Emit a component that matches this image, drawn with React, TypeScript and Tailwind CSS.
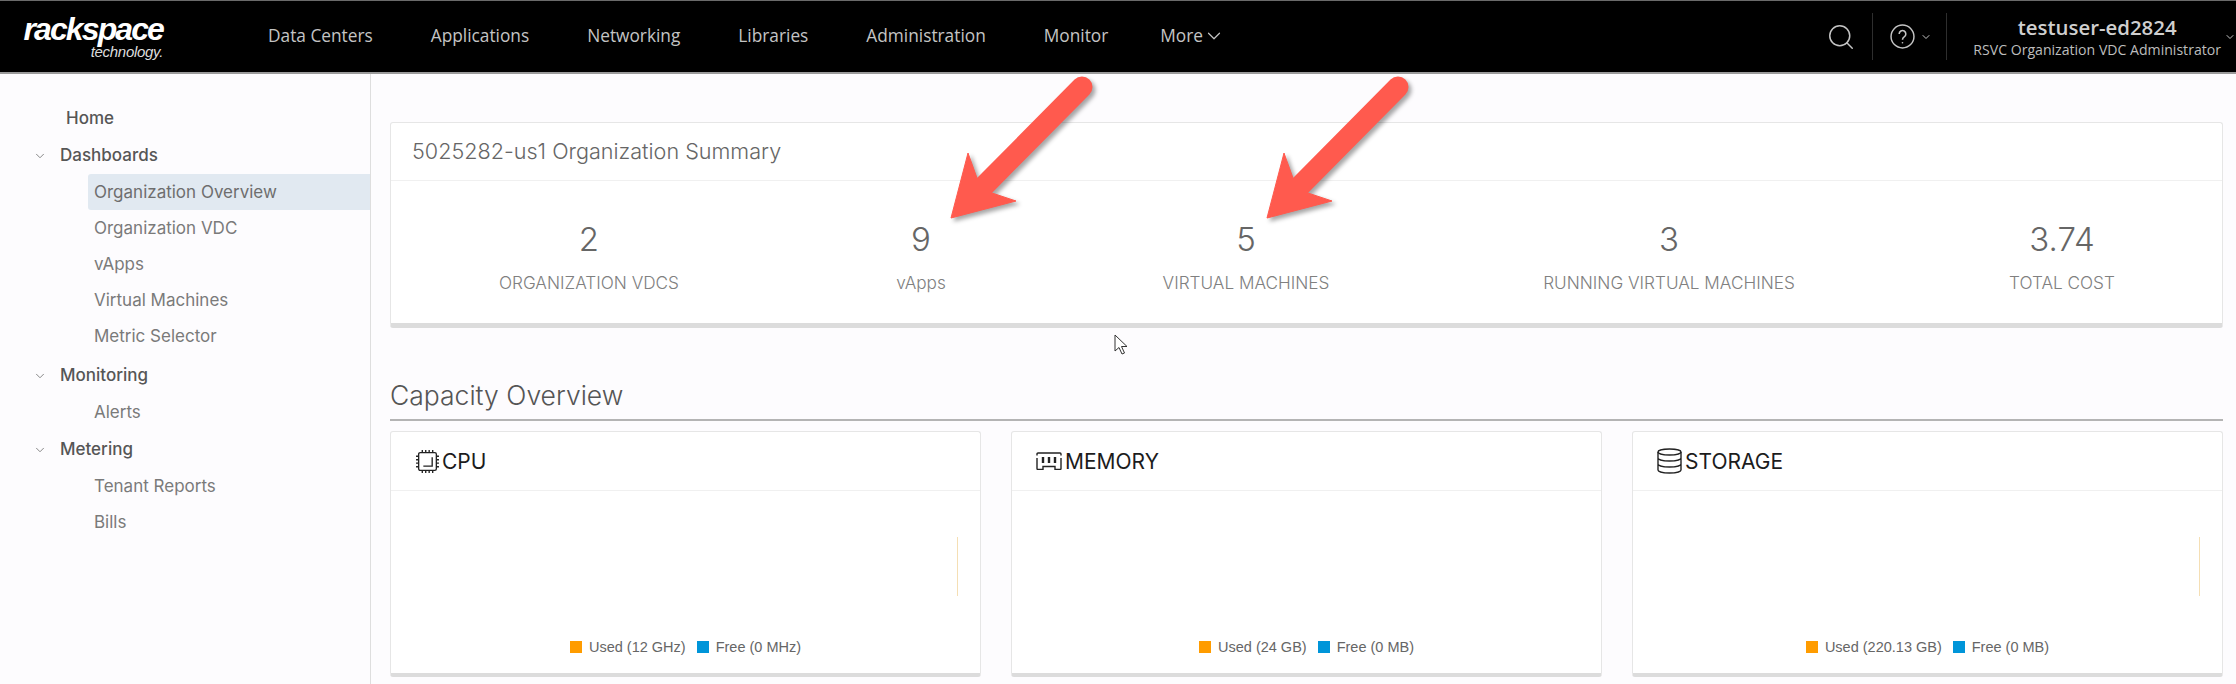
import { ChevronDown, Search } from 'lucide-react';

const navItems = ['Data Centers', 'Applications', 'Networking', 'Libraries', 'Administration', 'Monitor'];

const stats = [
  { value: '2', label: 'ORGANIZATION VDCS' },
  { value: '9', label: 'vApps' },
  { value: '5', label: 'VIRTUAL MACHINES' },
  { value: '3', label: 'RUNNING VIRTUAL MACHINES' },
  { value: '3.74', label: 'TOTAL COST' },
];

function SideGroup({ title, items, active }: { title: string; items: string[]; active?: string }) {
  return (
    <div className="mb-px">
      <div className="flex h-[37px] items-center pt-px font-medium text-[#565656]">
        <ChevronDown className="ml-[33px] mr-[13px] h-[14px] w-[14px] text-[#777]" strokeWidth={1.5} />
        {title}
      </div>
      {items.map((item) => (
        <div
          key={item}
          className={
            item === active
              ? 'ml-[88px] flex h-9 items-center rounded-l-[3px] bg-[#e1e9f1] pl-[6px] pt-px text-[#6e6e6e]'
              : 'ml-[88px] flex h-9 items-center pl-[6px] pt-px text-[#7a7a7a]'
          }
        >
          {item}
        </div>
      ))}
    </div>
  );
}

function CpuIcon() {
  return (
    <svg viewBox="0 0 24 24" className="h-[25px] w-[25px] shrink-0" fill="none" stroke="#222" strokeWidth="1.3">
      <rect x="3.5" y="3.5" width="17" height="17" rx="1.5" />
      <path d="M16.5 8v8.5H8M7 1v2.5M10.3 1v2.5M13.6 1v2.5M17 1v2.5M7 20.5V23M10.3 20.5V23M13.6 20.5V23M17 20.5V23M1 7h2.5M1 10.3h2.5M1 13.6h2.5M1 17h2.5M20.5 7H23M20.5 10.3H23M20.5 13.6H23M20.5 17H23" />
    </svg>
  );
}

function MemoryIcon() {
  return (
    <svg viewBox="0 0 26 18" className="h-[18px] w-[26px] shrink-0" fill="none" stroke="#222" strokeWidth="1.4">
      <path d="M1 3.5V2a1 1 0 0 1 1-1h22a1 1 0 0 1 1 1v1.5M1 6v10.500a1 1 0 0 0 1 1h5v-3h12v3h5a1 1 0 0 0 1-1V6" />
      <path d="M7 5v6M13 5v6M19 5v6" strokeWidth="2.400" />
    </svg>
  );
}

function StorageIcon() {
  return (
    <svg viewBox="0 0 25 26" className="h-[26px] w-[25px] shrink-0" fill="none" stroke="#222" strokeWidth="1.4">
      <ellipse cx="12.500" cy="4" rx="11.500" ry="3" />
      <path d="M1 4v18c0 1.700 5.100 3 11.500 3s11.500-1.300 11.500-3V4M1 10c0 1.700 5.100 3 11.500 3S24 11.700 24 10M1 16c0 1.700 5.100 3 11.500 3S24 17.700 24 16" />
    </svg>
  );
}

function CapacityCard({
  title,
  icon,
  used,
  free,
  bar,
  gap,
}: {
  title: string;
  icon: React.ReactNode;
  used: string;
  free: string;
  bar?: boolean;
  gap: string;
}) {
  return (
    <div className="flex h-[246px] flex-col rounded-[3px] border border-[#e6e6e6] border-b-[4px] border-b-[#dcdcdc] bg-white">
      <div className={`flex h-[59px] shrink-0 items-center border-b border-[#f0f0f0] pl-6 text-[21px] leading-none text-[#1c1c1c] ${gap}`}>
        {icon}
        <span>{title}</span>
      </div>
      <div className="flex h-[105px] shrink-0 items-end justify-end pr-[22px]">
        {bar && <div className="h-[59px] w-px bg-[#f5dfb4]" />}
      </div>
      <div className="mt-[44px] flex items-center justify-center font-['Liberation_Sans',sans-serif] text-[14.5px] leading-none text-[#666]">
        <span className="mr-[7px] h-3 w-3 bg-[#ff9c00]" />
        <span className="mr-[11px]">{used}</span>
        <span className="mr-[7px] h-3 w-3 bg-[#0095d9]" />
        <span>{free}</span>
      </div>
    </div>
  );
}

export default function App() {
  return (
    <div className="relative flex h-[684px] w-[2236px] flex-col overflow-hidden bg-[#fdfcfe] font-[Inter,sans-serif]">
      <header className="flex h-[74px] shrink-0 items-center border-t border-t-[#6a6a6a] border-b-2 border-b-[#9a9a9a] bg-black">
        <div className="ml-[23px] flex w-[140px] flex-col items-end font-['Liberation_Sans',sans-serif] italic text-white">
          <span className="text-[32px] font-bold leading-[28px] tracking-[-1.9px]">rackspace</span>
          <span className="mt-[2px] text-[15px] leading-[14px] tracking-[-0.3px] text-[#ddd]">technology.</span>
        </div>
        <nav className="ml-[105px] flex items-center gap-[58px] pb-[2px] font-['Open_Sans',sans-serif] text-[17.3px] text-[#c4c4c4]">
          {navItems.map((item) => (
            <span key={item}>{item}</span>
          ))}
          <span className="-ml-[6px] flex items-center">
            More
            <ChevronDown className="h-[22px] w-[22px]" strokeWidth={1.3} />
          </span>
        </nav>
        <div className="ml-auto flex h-full items-center text-[#c4c4c4]">
          <Search className="h-[30px] w-[30px]" strokeWidth={1.2} />
          <div className="ml-[16px] h-[47px] w-px bg-[#2e2e2e]" />
          <svg viewBox="0 0 24 24" className="ml-[17px] h-[25px] w-[25px]" fill="none" stroke="currentColor" strokeWidth="1.400">
            <circle cx="12" cy="12" r="11" />
            <path d="M8.800 9.500a3.200 3.200 0 1 1 4.800 2.800c-1 .6-1.600 1.300-1.600 2.700" strokeWidth="1.500" />
            <circle cx="12" cy="18" r=".8" fill="currentColor" stroke="none" />
          </svg>
          <ChevronDown className="ml-[5px] h-[12px] w-[12px]" strokeWidth={2} />
          <div className="ml-[14px] h-[47px] w-px bg-[#2e2e2e]" />
          <div className="ml-[26px] flex flex-col items-center font-['Open_Sans',sans-serif]">
            <span className="text-[20.4px] font-semibold leading-[26px] text-[#cfcfcf]">testuser-ed2824</span>
            <span className="text-[14.1px] leading-[20px] text-[#bdbdbd]">RSVC Organization VDC Administrator</span>
          </div>
          <ChevronDown className="ml-[3px] h-[12px] w-[12px]" strokeWidth={2} />
        </div>
      </header>

      <div className="flex min-h-0 flex-1">
        <aside className="w-[371px] shrink-0 border-r border-[#dedede] pt-[26px] text-[17px]">
          <div className="flex h-[37px] items-center pl-[66px] pt-px font-medium text-[#565656]">Home</div>
          <SideGroup
            title="Dashboards"
            items={['Organization Overview', 'Organization VDC', 'vApps', 'Virtual Machines', 'Metric Selector']}
            active="Organization Overview"
          />
          <div className="h-[2px]" />
          <SideGroup title="Monitoring" items={['Alerts']} />
          <SideGroup title="Metering" items={['Tenant Reports', 'Bills']} />
        </aside>

        <main className="min-w-0 flex-1 pl-[19px] pr-[13px] pt-[48px]">
          <section className="h-[206px] rounded-[3px] border border-[#e6e6e6] border-b-[5px] border-b-[#dcdcdc] bg-white">
            <div className="flex h-[58px] items-center border-b border-[#f0f0f0] pl-[21px] text-[21.6px] font-light text-[#666]">
              5025282-us1 Organization Summary
            </div>
            <div className="grid grid-cols-[300px_364px_286px_560px_226px] pl-[48px] pt-[38px]">
              {stats.map((stat) => (
                <div key={stat.label} className="flex flex-col items-center">
                  <span className="text-[33px] font-light leading-[40px] text-[#666]">{stat.value}</span>
                  <span className="mt-[14px] text-[17.2px] font-light leading-[20px] text-[#808080]">{stat.label}</span>
                </div>
              ))}
            </div>
          </section>

          <h2 className="mt-[48px] border-b-2 border-[#b4b4b4] pb-[4px] text-[26.5px] font-light leading-[39px] text-[#555]">
            Capacity Overview
          </h2>

          <div className="mt-[10px] grid grid-cols-3 gap-[30px]">
            <CapacityCard title="CPU" icon={<CpuIcon />} used="Used (12 GHz)" free="Free (0 MHz)" bar gap="gap-[2px]" />
            <CapacityCard title="MEMORY" icon={<MemoryIcon />} used="Used (24 GB)" free="Free (0 MB)" gap="gap-[3px]" />
            <CapacityCard title="STORAGE" icon={<StorageIcon />} used="Used (220.13 GB)" free="Free (0 MB)" bar gap="gap-[3px]" />
          </div>
        </main>
      </div>

      {/* annotation arrows + mouse cursor from the screenshot */}
      <svg
        viewBox="0 0 2236 684"
        className="pointer-events-none absolute left-0 top-0 h-[684px] w-[2236px] drop-shadow-[3px_3px_2px_rgba(0,0,0,0.35)]"
      >
        <g fill="#ff5a4e" stroke="#ff5a4e">
          <path d="M984 186 1082 87" strokeWidth="21" strokeLinecap="round" />
          <path d="M951 218 968 153 977 178 992 193 1016 201Z" strokeWidth="1" />
          <path d="M1300 186 1398 87" strokeWidth="21" strokeLinecap="round" />
          <path d="M1267 218 1284 153 1293 178 1308 193 1332 201Z" strokeWidth="1" />
        </g>
      </svg>
      <svg viewBox="0 0 16 22" className="pointer-events-none absolute left-[1114px] top-[334px] h-[22px] w-[16px]" fill="#fff" stroke="#333" strokeWidth="1">
        <path d="M1 1v16l4-3.500 3 6.500 2.500-1-3-6.500h5.500Z" />
      </svg>
    </div>
  );
}
